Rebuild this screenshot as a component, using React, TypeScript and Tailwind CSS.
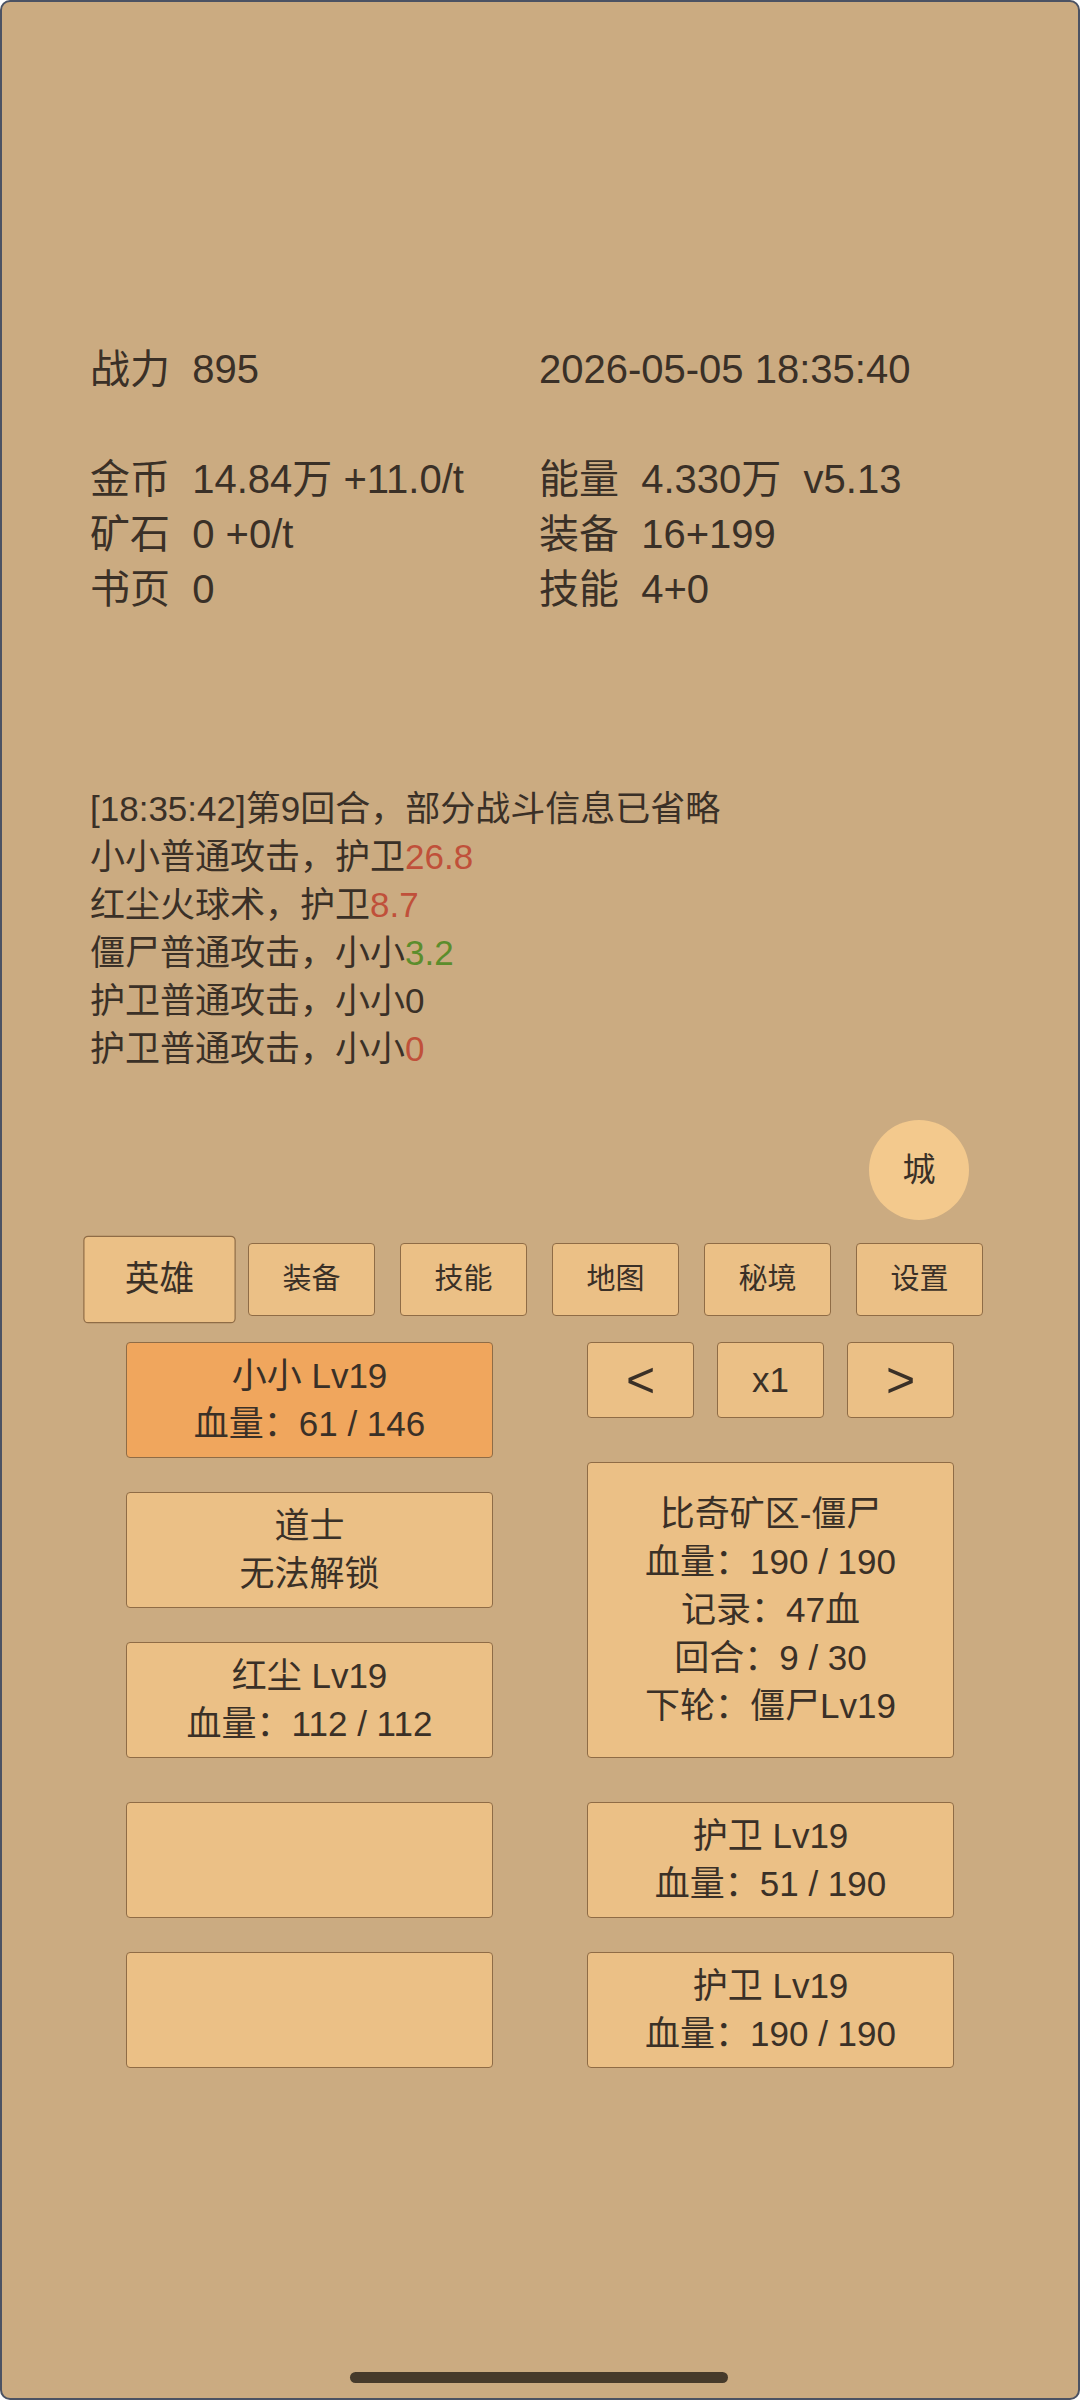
import React from 'react';

const font = { fontFamily: '"Liberation Sans", "Noto Sans CJK SC", sans-serif' };

const stats: [string, string][] = [
  ['战力  895', '2026-05-05 18:35:40'],
  ['', ''],
  ['金币  14.84万 +11.0/t', '能量  4.330万  v5.13'],
  ['矿石  0 +0/t', '装备  16+199'],
  ['书页  0', '技能  4+0'],
];

const logs: { text: string; num: string; tone: 'red' | 'green' | 'none' }[] = [
  { text: '[18:35:42]第9回合，部分战斗信息已省略', num: '', tone: 'none' },
  { text: '小小普通攻击，护卫', num: '26.8', tone: 'red' },
  { text: '红尘火球术，护卫', num: '8.7', tone: 'red' },
  { text: '僵尸普通攻击，小小', num: '3.2', tone: 'green' },
  { text: '护卫普通攻击，小小', num: '0', tone: 'none' },
  { text: '护卫普通攻击，小小', num: '0', tone: 'red' },
];

const tabs = ['英雄', '装备', '技能', '地图', '秘境', '设置'];

function Card({ lines, active }: { lines: string[]; active?: boolean }) {
  return (
    <div
      className={`h-[116px] rounded-[4px] border border-[#8f6c46] flex flex-col items-center justify-center text-[35px] leading-[48px] whitespace-pre ${
        active ? 'bg-[#f0a65d]' : 'bg-[#ebc086]'
      }`}
    >
      {lines.map((l, i) => (
        <div key={i}>{l}</div>
      ))}
    </div>
  );
}

export default function App() {
  return (
    <div
      style={font}
      className="w-[1080px] h-[2400px] bg-[#cbab81] text-[#3a3027] border-2 border-[#4b5263] rounded-[10px] overflow-hidden flex flex-col relative"
    >
      {/* resources */}
      <div className="mt-[340px] ml-[88px] grid grid-cols-[449px_1fr] text-[40px] leading-[55px]">
        {stats.map(([l, r], i) => (
          <React.Fragment key={i}>
            <div className="h-[55px] whitespace-pre">{l}</div>
            <div className="h-[55px] whitespace-pre">{r}</div>
          </React.Fragment>
        ))}
      </div>

      {/* battle log */}
      <div className="mt-[168px] ml-[88px] text-[35px] leading-[48px]">
        {logs.map((g, i) => (
          <div key={i} className="h-[48px] whitespace-pre">
            {g.text}
            {g.num && (
              <span
                className={
                  g.tone === 'red' ? 'text-[#c0503a]' : g.tone === 'green' ? 'text-[#5b8d2c]' : ''
                }
              >
                {g.num}
              </span>
            )}
          </div>
        ))}
      </div>

      {/* city button */}
      <div className="mt-[47px] ml-[867px] w-[100px] h-[100px] rounded-full bg-[#f3c98d] flex items-center justify-center text-[33px]">
        城
      </div>

      {/* tabs */}
      <div className="mt-[23px] ml-[94px] flex gap-[25px]">
        {tabs.map((t, i) => (
          <div
            key={t}
            className={`w-[127px] h-[73px] rounded-[4px] border border-[#8f6c46] bg-[#ebc086] flex items-center justify-center text-[29px] ${
              i === 0 ? 'scale-[1.2]' : ''
            }`}
          >
            {t}
          </div>
        ))}
      </div>

      {/* battle area */}
      <div className="mt-[26px] ml-[124px] grid grid-cols-[367px_367px] gap-x-[94px]">
        <div className="flex flex-col gap-[34px]">
          <Card lines={['小小 Lv19', '血量：61 / 146']} active />
          <Card lines={['道士', '无法解锁']} />
          <Card lines={['红尘 Lv19', '血量：112 / 112']} />
        </div>
        <div className="flex flex-col">
          <div className="flex gap-[23px]">
            {['<', 'x1', '>'].map((c) => (
              <div
                key={c}
                className={`w-[107px] h-[76px] rounded-[4px] border border-[#8f6c46] bg-[#ebc086] flex items-center justify-center ${
                  c === 'x1' ? 'text-[35px]' : 'text-[50px]'
                }`}
              >
                {c}
              </div>
            ))}
          </div>
          <div className="mt-[44px] flex-1 rounded-[4px] border border-[#8f6c46] bg-[#ebc086] flex flex-col items-center justify-center text-[35px] leading-[48px]">
            <div>比奇矿区-僵尸</div>
            <div>血量：190 / 190</div>
            <div>记录：47血</div>
            <div>回合：9 / 30</div>
            <div>下轮：僵尸Lv19</div>
          </div>
        </div>
      </div>

      <div className="mt-[44px] ml-[124px] grid grid-cols-[367px_367px] gap-x-[94px] gap-y-[34px]">
        <Card lines={[]} />
        <Card lines={['护卫 Lv19', '血量：51 / 190']} />
        <Card lines={[]} />
        <Card lines={['护卫 Lv19', '血量：190 / 190']} />
      </div>

      {/* gesture bar */}
      <div className="absolute left-[348px] bottom-[15px] w-[378px] h-[11px] rounded-full bg-[#463a2b]" />
    </div>
  );
}
